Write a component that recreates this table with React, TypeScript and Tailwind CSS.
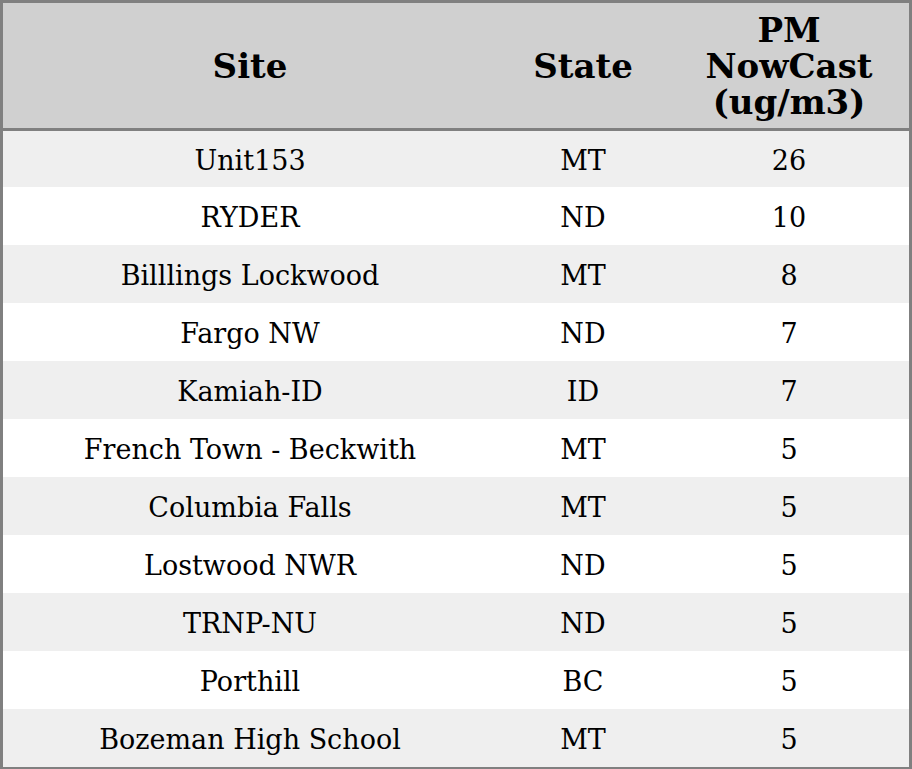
const ROWS: [string, string, number][] = [
  ['Unit153', 'MT', 26],
  ['RYDER', 'ND', 10],
  ['Billlings Lockwood', 'MT', 8],
  ['Fargo NW', 'ND', 7],
  ['Kamiah-ID', 'ID', 7],
  ['French Town - Beckwith', 'MT', 5],
  ['Columbia Falls', 'MT', 5],
  ['Lostwood NWR', 'ND', 5],
  ['TRNP-NU', 'ND', 5],
  ['Porthill', 'BC', 5],
  ['Bozeman High School', 'MT', 5],
]

const GRID = 'grid grid-cols-[494px_172px_240px]'

const App = () => {
  return (
    <div className="w-[912px] h-[769px] border-[3px] border-b-2 border-[#808080] bg-white text-black font-['DejaVu_Serif',serif] overflow-hidden">
      {/* Header */}
      <div className={`${GRID} h-[128px] bg-[#d0d0d0] border-b-[3px] border-[#808080] items-center text-center font-bold text-[34px] leading-[36px]`}>
        <div>Site</div>
        <div>State</div>
        <div>PM<br />NowCast<br />(ug/m3)</div>
      </div>

      {/* Body */}
      {ROWS.map(([site, state, value], i) => (
        <div
          key={site}
          className={`${GRID} ${i === 0 ? 'h-[56px]' : 'h-[58px]'} pt-1 items-center text-center text-[27px] ${i % 2 === 0 ? 'bg-[#efefef]' : 'bg-white'}`}
        >
          <div>{site}</div>
          <div>{state}</div>
          <div>{value}</div>
        </div>
      ))}
    </div>
  )
}

export default App
